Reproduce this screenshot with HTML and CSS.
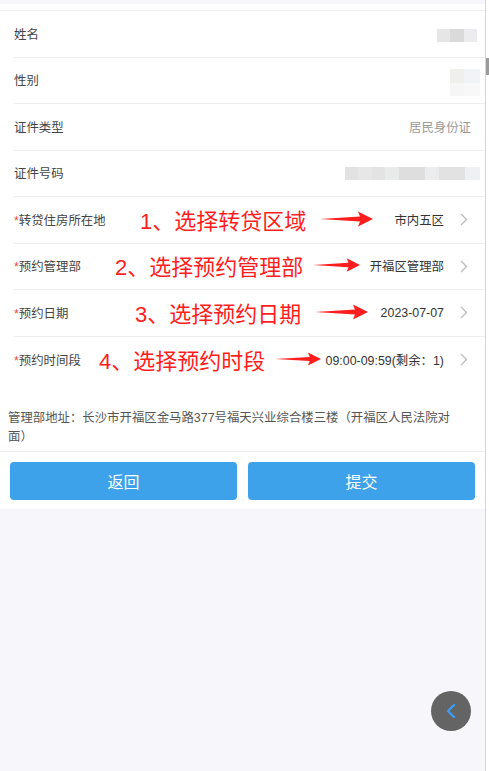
FILE: index.html
```html
<!DOCTYPE html>
<html lang="zh-CN">
<head>
  <meta charset="UTF-8">
  <meta name="viewport" content="width=device-width, initial-scale=1.0">
  <title>预约转贷</title>
  <link rel="stylesheet" href="styles.css">
</head>
<body>
  <div class="page">
    <div class="main">
      <section class="form">
        <div class="row">
          <span class="label">姓名</span>
          <span class="mosaic mosaic-name"></span>
        </div>
        <div class="row">
          <span class="label">性别</span>
          <span class="mosaic mosaic-sex"></span>
        </div>
        <div class="row">
          <span class="label">证件类型</span>
          <span class="value value-muted">居民身份证</span>
        </div>
        <div class="row">
          <span class="label">证件号码</span>
          <span class="mosaic mosaic-id"></span>
        </div>

        <div class="row row-select">
          <span class="label"><i class="req">*</i>转贷住房所在地</span>
          <span class="note note-1">1、选择转贷区域</span>
          <svg class="arrow arrow-1" viewBox="0 0 53 16"><path d="M0 8 L40 5.6 L38 0.5 L53 8 L38 15.5 L40 10.4 Z"/></svg>
          <span class="value">市内五区</span>
          <svg class="chevron" viewBox="0 0 8 13"><polyline points="1,1 6.5,6.5 1,12"/></svg>
        </div>
        <div class="row row-select">
          <span class="label"><i class="req">*</i>预约管理部</span>
          <span class="note note-2">2、选择预约管理部</span>
          <svg class="arrow arrow-2" viewBox="0 0 53 16"><path d="M0 8 L40 5.6 L38 0.5 L53 8 L38 15.5 L40 10.4 Z"/></svg>
          <span class="value">开福区管理部</span>
          <svg class="chevron" viewBox="0 0 8 13"><polyline points="1,1 6.5,6.5 1,12"/></svg>
        </div>
        <div class="row row-select">
          <span class="label"><i class="req">*</i>预约日期</span>
          <span class="note note-3">3、选择预约日期</span>
          <svg class="arrow arrow-3" viewBox="0 0 53 16"><path d="M0 8 L40 5.6 L38 0.5 L53 8 L38 15.5 L40 10.4 Z"/></svg>
          <span class="value">2023-07-07</span>
          <svg class="chevron" viewBox="0 0 8 13"><polyline points="1,1 6.5,6.5 1,12"/></svg>
        </div>
        <div class="row row-select row-last">
          <span class="label"><i class="req">*</i>预约时间段</span>
          <span class="note note-4">4、选择预约时段</span>
          <svg class="arrow arrow-4" viewBox="0 0 53 16"><path d="M0 8 L40 5.6 L38 0.5 L53 8 L38 15.5 L40 10.4 Z"/></svg>
          <span class="value">09:00-09:59(剩余：1)</span>
          <svg class="chevron" viewBox="0 0 8 13"><polyline points="1,1 6.5,6.5 1,12"/></svg>
        </div>
      </section>

      <p class="address">管理部地址：长沙市开福区金马路377号福天兴业综合楼三楼（开福区人民法院对面）</p>

      <div class="actions">
        <button class="btn">返回</button>
        <button class="btn">提交</button>
      </div>
    </div>

    <div class="scrollbar"><div class="thumb"></div></div>
  </div>

  <button class="float-back" aria-label="返回">
    <svg viewBox="0 0 10 14"><polyline points="8,1 2,7 8,13"/></svg>
  </button>
</body>
</html>
```

FILE: styles.css
```css
/* Global */
body {
  margin: 0;
  font-family: 'Liberation Sans', 'Noto Sans CJK SC', sans-serif;
  font-size: 12.4px;
  color: #333;
  background-color: #f7f7fb;
}

.page {
  display: flex;
  height: 771px;
}

.main {
  flex: 1;
  padding-top: 4px;
}

/* Scrollbar strip on the right edge */
.scrollbar {
  width: 3px;
  border-left: 1px solid #d6d6d6;
  background-color: #fff;
}

.thumb {
  margin-top: 58px;
  height: 17px;
  background-color: #9a9a9a;
}

/* Form rows */
.form {
  background-color: #fff;
  padding-top: 6px;
}

.form::before {
  content: '';
  display: block;
  border-top: 1px solid #eee;
}

.row {
  position: relative;
  display: flex;
  align-items: center;
  box-sizing: border-box;
  height: 46.5px;
  margin-left: 14px;
  padding-right: 3px;
  border-bottom: 1px solid #eee;
}

.row-last {
  border-bottom: none;
}

.label {
  flex: 1;
  color: #444;
}

.req {
  font-style: normal;
  color: #e8503f;
}

.value {
  color: #333;
}

.value-muted {
  margin-right: 11px;
  color: #999;
}

.row-select .value {
  margin-right: 16px;
}

.chevron {
  width: 8px;
  height: 13px;
  margin-right: 14px;
  fill: none;
  stroke: #bbb;
  stroke-width: 1.3;
}

/* Red annotations drawn over the form */
.note {
  position: absolute;
  top: 50%;
  transform: translateY(-54%);
  font-size: 22px;
  color: #ff1d1d;
  white-space: nowrap;
}

.note-1 { left: 126px; }
.note-2 { left: 101px; }
.note-3 { left: 121px; }
.note-4 { left: 85px; }

.arrow {
  position: absolute;
  top: 50%;
  width: 53px;
  height: 16px;
  margin-top: -9px;
  fill: #ff1d1d;
}

.arrow-1 { left: 306px; }
.arrow-2 { left: 299px; width: 47px; }
.arrow-3 { left: 301px; }
.arrow-4 { left: 261px; width: 46px; }

/* Blurred personal data */
.mosaic {
  display: block;
  margin-right: 2px;
}

.mosaic-name {
  width: 40px;
  height: 13px;
  margin-top: 4px;
  margin-right: 5px;
  background: linear-gradient(to right, #e6e6e6 0 13px, #dadada 13px 27px, #ececef 27px);
}

.mosaic-sex {
  width: 30px;
  height: 27px;
  margin-top: 4px;
  background:
    linear-gradient(to right, #efefee 0 14px, #f1f3f6 14px) top / 100% 14px no-repeat,
    linear-gradient(to right, #f6f6f6 0 14px, #f8f8f8 14px) bottom / 100% 13px no-repeat;
}

.mosaic-id {
  width: 135px;
  height: 13px;
  background: linear-gradient(to right,
    #e2e2e2 0 13px, #e6e7e6 13px 27px, #e3e3e3 27px 40px, #e9ebea 40px 54px,
    #dedede 54px 80px, #eaeced 80px 94px, #e2e2e3 94px 120px, #eef0f4 120px);
}

/* Address */
.address {
  margin: 0;
  padding: 26px 20px 4px 8px;
  line-height: 19px;
  color: #555;
  background-color: #fff;
}

/* Buttons */
.actions {
  display: flex;
  gap: 11px;
  padding: 10px 10px 9px;
  background-color: #fff;
  border-top: 1px solid #eee;
}

.btn {
  flex: 1;
  height: 38px;
  border: none;
  border-radius: 4px;
  background-color: #3da2e9;
  color: #fff;
  font-family: inherit;
  font-size: 16px;
}

/* Floating back button */
.float-back {
  position: fixed;
  left: 431px;
  top: 691px;
  width: 40px;
  height: 40px;
  padding: 0;
  border: none;
  border-radius: 50%;
  background-color: #646464;
  display: flex;
  align-items: center;
  justify-content: center;
}

.float-back svg {
  width: 10px;
  height: 14px;
  fill: none;
  stroke: #3d9cf0;
  stroke-width: 2.4;
  stroke-linecap: round;
  stroke-linejoin: round;
}
```
